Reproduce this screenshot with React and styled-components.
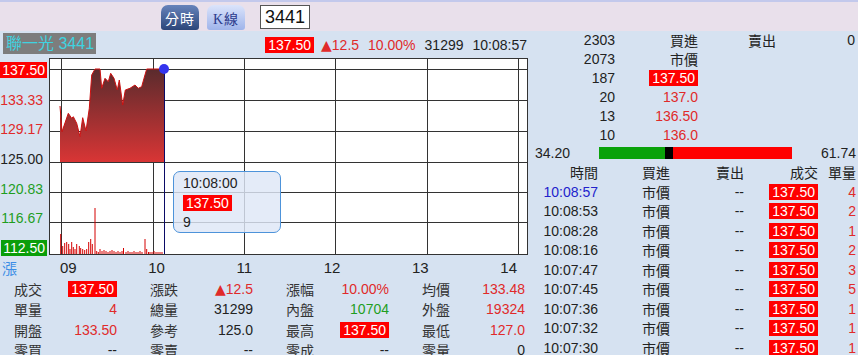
import React from 'react'
import styled, { createGlobalStyle } from 'styled-components'

const GlobalStyle = createGlobalStyle`
  body {
    margin: 0;
    font-family: "Liberation Sans", "Noto Sans CJK TC", Arial, sans-serif;
    font-size: 14px;
    color: #222;
    background: #d6e2f1;
    overflow: hidden;
  }
`

const Page = styled.div`
  width: 858px;
  height: 355px;
  overflow: hidden;
  background: #d6e2f1;
`

const TopBar = styled.div`
  height: 29px;
  border-top: 2px solid #c3c9ec;
  background: #e9e0eb;
  display: flex;
  align-items: flex-end;
  padding-left: 161px;
  gap: 8px;
`

const Tab = styled.div`
  width: 38px;
  height: 25px;
  margin-bottom: 1px;
  border-radius: 7px 7px 3px 3px;
  display: flex;
  align-items: center;
  justify-content: center;
  font-size: 14px;
  letter-spacing: 1px;
  color: ${(p) => (p.active ? '#fff' : '#2b3a8c')};
  background: ${(p) =>
    p.active
      ? 'linear-gradient(#6683bb, #2c4679)'
      : 'linear-gradient(#dbe4fb, #9fb4ea)'};
  font-family: ${(p) => (p.active ? 'inherit' : '"Liberation Serif", "Noto Sans CJK TC", serif')};
`

const CodeInput = styled.div`
  align-self: center;
  margin-left: 7px;
  width: 44px;
  height: 22px;
  border: 1px solid #555;
  background: #fff;
  font-size: 18px;
  line-height: 22px;
  padding-left: 4px;
  color: #111;
`

const Main = styled.div`
  display: flex;
  align-items: flex-start;
`

const LeftPanel = styled.div`
  width: 530px;
  flex-shrink: 0;
`

const HeaderRow = styled.div`
  height: 24px;
  display: flex;
  align-items: center;
  justify-content: space-between;
  padding: 0 3px;
`

const StockName = styled.div`
  background: #7d7d7d;
  color: #3fd3e0;
  font-size: 16px;
  line-height: 21px;
  padding: 0 2px 0 3px;
`

const Quote = styled.div`
  display: flex;
  align-items: center;
  gap: 9px;
  margin-top: 3px;
`

const Val = styled.span`
  color: ${(p) => p.color || '#222'};
`

const Arrow = styled.span`
  font-family: "DejaVu Sans", sans-serif;
  font-size: 14px;
  margin: 0 0 0 -2px;
`

const Tag = styled.span`
  background: #ff0000;
  color: #fff;
  padding: 0 3px;
  line-height: 16px;
  display: inline-block;
`

const ChartRow = styled.div`
  display: flex;
  height: 201px;
`

const YAxis = styled.div`
  width: 49px;
  box-sizing: border-box;
  padding: 7px 4px 0 0;
  display: flex;
  flex-direction: column;
  justify-content: space-between;
  align-items: flex-end;
`

const YLabel = styled.div`
  line-height: 16px;
  padding: 0 2px;
  margin-right: ${(p) => (p.boxed ? '-2px' : '0')};
  color: ${(p) => (p.boxed ? '#fff' : p.color)};
  background: ${(p) => p.bg || 'transparent'};
`

const ChartWrap = styled.div`
  position: relative;
  margin-top: 3px;
  width: 479px;
  height: 198px;
`

const Tooltip = styled.div`
  position: absolute;
  left: 124px;
  top: 113px;
  width: 97px;
  height: 57px;
  border: 1.5px solid #4d93da;
  border-radius: 7px;
  background: rgba(222, 231, 247, 0.82);
  padding: 3px 0 0 9px;
  display: flex;
  flex-direction: column;
  align-items: flex-start;
  gap: 3px;
  line-height: 17px;
`

const TimeAxis = styled.div`
  height: 23px;
  display: flex;
  align-items: center;
`

const RiseMark = styled.div`
  width: 60px;
  padding-left: 2px;
  box-sizing: border-box;
  color: #3b8de6;
  font-size: 15px;
`

const TimeTicks = styled.div`
  width: 457px;
  display: flex;
  justify-content: space-between;
  font-size: 15px;
  color: #222;
`

const StatsGrid = styled.div`
  display: grid;
  grid-template-columns: repeat(4, 136px);
  grid-auto-rows: 20.3px;
`

const Stat = styled.div`
  display: flex;
  align-items: center;
  justify-content: space-between;
  padding: 0 19px 0 14px;
`

const StatLabel = styled.span`
  color: #333;
`

const RightPanel = styled.div`
  flex: 1;
`

const BookGrid = styled.div`
  display: grid;
  grid-template-columns: 85px 83px 78px 1fr;
  grid-auto-rows: 19px;
  padding-right: 3px;
  align-items: center;
  text-align: right;
  margin-top: -1px;
`

const RatioRow = styled.div`
  height: 18px;
  display: grid;
  grid-template-columns: 69px 193px 1fr;
  align-items: center;
  padding-right: 2px;
`

const RatioValue = styled.span`
  padding-left: ${(p) => (p.right ? '0' : '5px')};
  text-align: ${(p) => (p.right ? 'right' : 'left')};
`

const RatioBar = styled.div`
  display: flex;
  height: 12px;
`

const BarPart = styled.div`
  height: 100%;
  width: ${(p) => p.w}px;
  background: ${(p) => p.c};
`

const TradeGrid = styled.div`
  display: grid;
  grid-template-columns: 68px 72px 74px 74px 38px;
  grid-template-rows: 20px;
  grid-auto-rows: 19.5px;
  align-items: center;
  text-align: right;
`

const RED = '#e02a2a'
const GREEN = '#1f9e1f'

const pricePts = [
  [11, 48], [13, 73.7], [19.3, 55.3], [22.7, 60.3], [24.3, 58.7], [27.7, 65.3],
  [31, 78.7], [33.7, 59.7], [37, 73], [40.3, 50.3], [42.7, 17], [46, 11],
  [51, 11], [52.7, 30.3], [56, 20.3], [59.3, 23.7], [61.7, 15.3], [65, 20.3],
  [68.3, 32], [70.3, 22], [73.7, 47], [76.3, 32], [81, 30.3], [86, 27],
  [89.3, 30.3], [92.7, 28.7], [95, 20.3], [97.7, 11], [115, 11],
]

const volBars = [
  [11.7, 20], [13.7, 8], [15.7, 11], [17.7, 12], [19.7, 10], [21, 5], [22.7, 12],
  [24.3, 7], [26, 5], [27.7, 10], [30.3, 8], [31.7, 6], [33.7, 5], [35.7, 4],
  [37.7, 5], [39.7, 12], [41.7, 15], [43.3, 10], [46, 46], [47.7, 3], [49.3, 2],
  [51, 5], [53, 3], [55, 4], [57, 3], [59, 2], [61, 3], [63, 4], [65, 3], [67, 2],
  [69, 3], [71, 2], [73, 3], [74.5, 6], [77, 2], [79, 3], [81, 2], [83, 2], [85, 3],
  [87, 2], [89, 2], [91, 3], [93, 2], [96, 15], [97.7, 5], [99.5, 2], [101, 2],
  [103, 2], [105, 3], [107, 2], [109, 2], [111, 2], [113, 2],
]

const hLines = [11, 42, 73, 104, 134, 164]
const vLines = [12, 103.5, 194.5, 286, 377.5, 469]

const PriceChart = () => {
  const line = pricePts.map(([x, y], i) => `${i ? 'L' : 'M'}${x},${y}`).join(' ')
  const area = `${line} L115,104 L11,104 Z`
  return (
    <svg width="479" height="198" style={{ display: 'block' }}>
      <defs>
        <linearGradient id="fill" x1="0" y1="0" x2="0" y2="1">
          <stop offset="0" stopColor="#5a2b2d" />
          <stop offset="1" stopColor="#d93535" />
        </linearGradient>
      </defs>
      <rect x="0.5" y="0.5" width="478" height="196" fill="#fff" stroke="#333" />
      {hLines.map((y) => (
        <line key={y} x1="0" x2="479" y1={y + 0.5} y2={y + 0.5} stroke="#333" />
      ))}
      {vLines.map((x) => (
        <line key={x} x1={Math.round(x) + 0.5} x2={Math.round(x) + 0.5} y1="0" y2="197" stroke="#333" />
      ))}
      <path d={area} fill="url(#fill)" />
      <path d={line} fill="none" stroke="#cc1111" strokeWidth="1" />
      {volBars.map(([x, h]) => (
        <line key={x} x1={x} x2={x} y1={196} y2={196 - h} stroke="#d40000" strokeWidth="1" />
      ))}
      <line x1="115.5" x2="115.5" y1="11" y2="196" stroke="#0a0a66" />
      <circle cx="115" cy="11" r="5" fill="#3434ee" />
    </svg>
  )
}

const Up = ({ children }) => (
  <Val color={RED}>
    <Arrow>▲</Arrow>
    {children}
  </Val>
)

const stats = [
  ['成交', <Tag>137.50</Tag>], ['漲跌', <Up>12.5</Up>],
  ['漲幅', <Val color={RED}>10.00%</Val>], ['均價', <Val color={RED}>133.48</Val>],
  ['單量', <Val color={RED}>4</Val>], ['總量', <Val>31299</Val>],
  ['內盤', <Val color={GREEN}>10704</Val>], ['外盤', <Val color={RED}>19324</Val>],
  ['開盤', <Val color={RED}>133.50</Val>], ['參考', <Val>125.0</Val>],
  ['最高', <Tag>137.50</Tag>], ['最低', <Val color={RED}>127.0</Val>],
  ['零買', <Val>--</Val>], ['零賣', <Val>--</Val>],
  ['零成', <Val>--</Val>], ['零量', <Val>0</Val>],
]

const book = [
  ['2303', <Val>買進</Val>, <Val>賣出</Val>, '0'],
  ['2073', <Val>市價</Val>, '', ''],
  ['187', <Tag>137.50</Tag>, '', ''],
  ['20', <Val color={RED}>137.0</Val>, '', ''],
  ['13', <Val color={RED}>136.50</Val>, '', ''],
  ['10', <Val color={RED}>136.0</Val>, '', ''],
]

const trades = [
  ['10:08:57', '4'], ['10:08:53', '2'], ['10:08:28', '1'], ['10:08:16', '2'],
  ['10:07:47', '3'], ['10:07:45', '5'], ['10:07:36', '1'], ['10:07:32', '1'],
  ['10:07:30', '1'],
]

const App = () => (
  <Page>
    <GlobalStyle />
    <TopBar>
      <Tab active>分時</Tab>
      <Tab>K線</Tab>
      <CodeInput>3441</CodeInput>
    </TopBar>
    <Main>
      <LeftPanel>
        <HeaderRow>
          <StockName>聯一光 3441</StockName>
          <Quote>
            <Tag>137.50</Tag>
            <Up>12.5</Up>
            <Val color={RED}>10.00%</Val>
            <Val>31299</Val>
            <Val>10:08:57</Val>
          </Quote>
        </HeaderRow>
        <ChartRow>
          <YAxis>
            <YLabel boxed bg="#ff0000">137.50</YLabel>
            <YLabel color={RED}>133.33</YLabel>
            <YLabel color={RED}>129.17</YLabel>
            <YLabel color="#222">125.00</YLabel>
            <YLabel color={GREEN}>120.83</YLabel>
            <YLabel color={GREEN}>116.67</YLabel>
            <YLabel boxed bg="#0a9e0a">112.50</YLabel>
          </YAxis>
          <ChartWrap>
            <PriceChart />
            <Tooltip>
              <Val>10:08:00</Val>
              <Tag>137.50</Tag>
              <Val>9</Val>
            </Tooltip>
          </ChartWrap>
        </ChartRow>
        <TimeAxis>
          <RiseMark>漲</RiseMark>
          <TimeTicks>
            {['09', '10', '11', '12', '13', '14'].map((t) => (
              <span key={t}>{t}</span>
            ))}
          </TimeTicks>
        </TimeAxis>
        <StatsGrid>
          {stats.map(([label, value], i) => (
            <Stat key={i}>
              <StatLabel>{label}</StatLabel>
              {value}
            </Stat>
          ))}
        </StatsGrid>
      </LeftPanel>
      <RightPanel>
        <BookGrid>
          {book.map((row, i) =>
            row.map((cell, j) => <div key={`${i}-${j}`}>{cell}</div>)
          )}
        </BookGrid>
        <RatioRow>
          <RatioValue>34.20</RatioValue>
          <RatioBar>
            <BarPart w={66} c="#0aa20a" />
            <BarPart w={8} c="#000" />
            <BarPart w={119} c="#ff0000" />
          </RatioBar>
          <RatioValue right>61.74</RatioValue>
        </RatioRow>
        <TradeGrid>
          <div>時間</div>
          <div>買進</div>
          <div>賣出</div>
          <div>成交</div>
          <div>單量</div>
          {trades.map(([t, q], i) => (
            <React.Fragment key={t}>
              <Val color={i === 0 ? '#2222cc' : '#222'}>{t}</Val>
              <div>市價</div>
              <div>--</div>
              <div><Tag>137.50</Tag></div>
              <Val color={RED}>{q}</Val>
            </React.Fragment>
          ))}
        </TradeGrid>
      </RightPanel>
    </Main>
  </Page>
)

export default App
